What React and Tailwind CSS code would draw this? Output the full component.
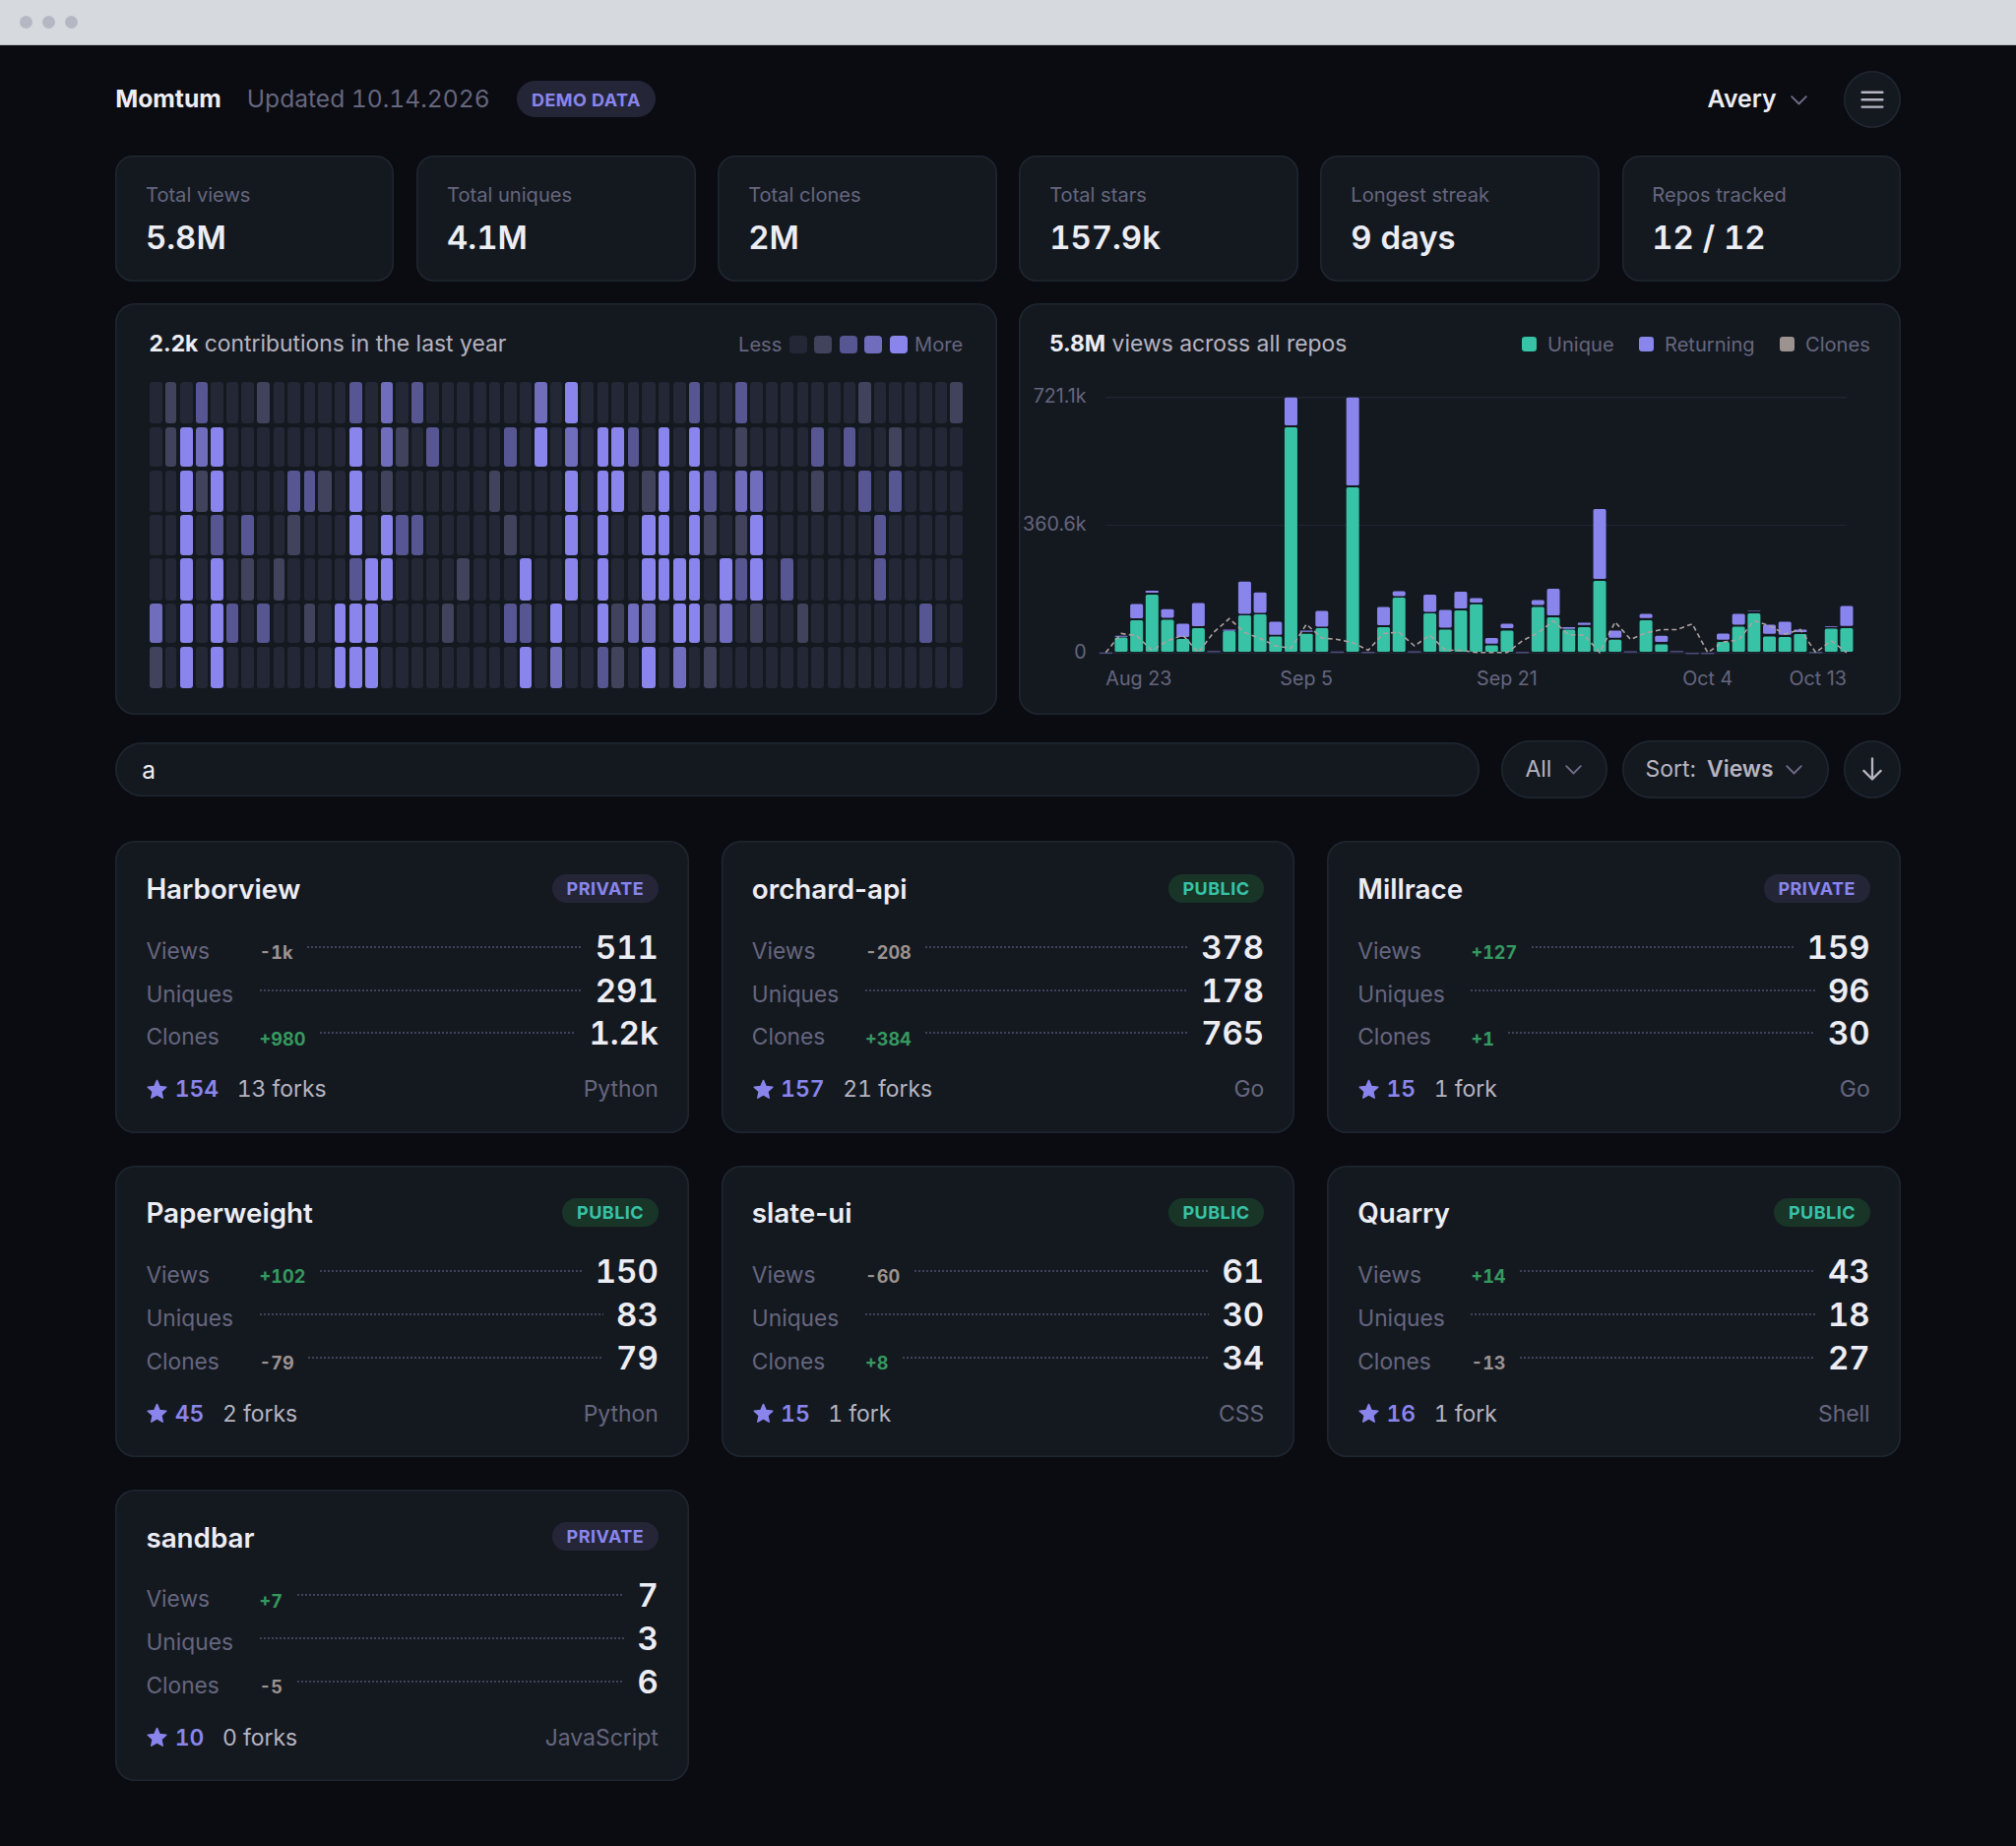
import React from "react";

const STATS = [
  ["Total views", "5.8M"],
  ["Total uniques", "4.1M"],
  ["Total clones", "2M"],
  ["Total stars", "157.9k"],
  ["Longest streak", "9 days"],
  ["Repos tracked", "12 / 12"],
];

const REPOS = [
  { name: "Harborview", priv: true, views: ["-1k", "511"], uniques: "291", clones: ["+980", "1.2k"], stars: "154", forks: "13 forks", lang: "Python" },
  { name: "orchard-api", priv: false, views: ["-208", "378"], uniques: "178", clones: ["+384", "765"], stars: "157", forks: "21 forks", lang: "Go" },
  { name: "Millrace", priv: true, views: ["+127", "159"], uniques: "96", clones: ["+1", "30"], stars: "15", forks: "1 fork", lang: "Go" },
  { name: "Paperweight", priv: false, views: ["+102", "150"], uniques: "83", clones: ["-79", "79"], stars: "45", forks: "2 forks", lang: "Python" },
  { name: "slate-ui", priv: false, views: ["-60", "61"], uniques: "30", clones: ["+8", "34"], stars: "15", forks: "1 fork", lang: "CSS" },
  { name: "Quarry", priv: false, views: ["+14", "43"], uniques: "18", clones: ["-13", "27"], stars: "16", forks: "1 fork", lang: "Shell" },
  { name: "sandbar", priv: true, views: ["+7", "7"], uniques: "3", clones: ["-5", "6"], stars: "10", forks: "0 forks", lang: "JavaScript" },
];

const LEVELS = ["bg-[#242736]", "bg-[#41425b]", "bg-[#575592]", "bg-[#706dbd]", "bg-[#8a85ec]"];

// Column index -> activity level, one record per weekday; absent columns are level 0.
const HEAT = [
  { 1: 1, 3: 2, 7: 1, 13: 2, 15: 3, 17: 2, 25: 3, 27: 4, 35: 2, 38: 2, 46: 1, 52: 1 },
  { 1: 1, 2: 4, 3: 3, 4: 4, 13: 4, 15: 3, 16: 1, 18: 2, 23: 2, 25: 4, 27: 3, 29: 4, 30: 4, 31: 2, 33: 4, 35: 4, 38: 1, 43: 2, 45: 2, 48: 1 },
  { 2: 4, 3: 1, 4: 4, 9: 2, 10: 2, 11: 1, 13: 4, 15: 1, 22: 1, 27: 4, 29: 4, 30: 4, 32: 1, 33: 4, 35: 4, 36: 2, 38: 3, 39: 3, 43: 1, 46: 2, 48: 2 },
  { 2: 4, 4: 2, 6: 2, 9: 1, 13: 4, 15: 4, 16: 2, 17: 2, 23: 1, 27: 4, 29: 4, 32: 4, 33: 4, 35: 4, 36: 1, 38: 1, 39: 4, 47: 2 },
  { 2: 4, 4: 4, 6: 1, 8: 1, 13: 2, 14: 4, 15: 4, 20: 1, 24: 4, 27: 4, 29: 4, 32: 4, 33: 4, 34: 4, 35: 4, 37: 4, 38: 2, 39: 4, 41: 2, 47: 2 },
  { 0: 3, 2: 4, 4: 4, 5: 2, 7: 2, 10: 1, 12: 4, 13: 4, 14: 4, 19: 1, 23: 2, 24: 2, 26: 4, 29: 4, 30: 1, 31: 3, 32: 3, 34: 4, 35: 4, 36: 1, 37: 3, 39: 1, 42: 1, 50: 2 },
  { 0: 1, 2: 4, 4: 4, 12: 4, 13: 4, 14: 4, 24: 4, 26: 3, 29: 2, 30: 1, 32: 4, 34: 3, 36: 1 },
];

// Relative widths of the 53 week columns.
const WEEKS = "87878788787878878787887878788787878788787878878787878".split("");

// [unique top, returning top, returning bottom] in thirds of a pixel;
// a single number marks a day with no traffic.
const BARS = [
  [1090], [1042, 1037, 1040], [990, 940, 984], [912, 900, 906], [988, 956, 982], [1047, 1000, 1041], [1014, 937, 1008],
  [1085], [1023, 1018, 1022], [975, 872, 970], [972, 905, 967], [1039, 994, 1034], [402, 311, 396], [1031, 1021, 1025],
  [1014, 961, 1009], [1087], [585, 311, 579], [1088], [1011, 949, 1005], [921, 901, 916], [1086], [969, 912, 964],
  [1018, 958, 1012], [960, 903, 954], [941, 922, 936], [1066, 1044, 1061], [1021, 1000, 1014], [1088], [949, 928, 943],
  [981, 894, 975], [1018, 1011, 1016], [1011, 997, 1004], [870, 651, 864], [1049, 1021, 1043], [1086], [990, 970, 983],
  [1063, 1037, 1056], [1085], [1091], [1091], [1056, 1030, 1049], [1009, 970, 1003], [969, 961, 963], [1039, 1003, 1031],
  [1041, 994, 1034], [1032, 1018, 1026], [1088], [1015, 1008, 1010], [1014, 946, 1007],
];
const CLONES = [
  1088, 1030, 1037, 1082, 1052, 1035, 1088, 1026, 985, 1027, 1045, 1068, 1075, 1002, 1044, 1048, 1058, 1081, 1030, 1026,
  1068, 1035, 1081, 1081, 1088, 1088, 1088, 1052, 1028, 992, 1034, 1035, 1088, 995, 1048, 1028, 1018, 1018, 1001, 1088,
  1056, 1050, 991, 1006, 1032, 1018, 1088, 1052, 1088,
];
const X0 = 88.3;
const STEP = 15.68;
const cx = (i) => X0 + i * STEP;
const cy = (v) => v / 3 - 7.9;

const PANEL = "bg-[#141920] inset-ring-[1.6px] inset-ring-[#1f262f]";

function Chevron() {
  return (
    <svg className="h-[10px] w-[17px] shrink-0" viewBox="0 0 17 10" fill="none" stroke="#6c6c86" strokeWidth="1.9" strokeLinecap="round" strokeLinejoin="round">
      <path d="M1.2 1.2 8.5 8.5 15.8 1.2" />
    </svg>
  );
}

function Header() {
  return (
    <header className="flex h-[59px] items-center">
      <span className="pb-[2px] text-[24.7px] leading-[30px] font-bold text-[#ededf4]">Momtum</span>
      <span className="ml-[26px] pb-[2px] text-[24.6px] leading-[30px] text-[#66667e] tabular-nums">Updated 10.14.2026</span>
      <span className="ml-[27.3px] flex h-[37px] w-[141px] items-center justify-center rounded-full bg-[#242638] pt-[2px] text-[18px] leading-none font-bold tracking-[0.025em] text-[#8a85ec]">DEMO DATA</span>
      <span className="ml-auto pb-[2px] text-[24.8px] leading-[30px] font-semibold text-[#ededf4]">Avery</span>
      <span className="mr-[37px] ml-[14px] flex pt-[2px]"><Chevron /></span>
      <button className={`flex size-[58.3px] items-center justify-center rounded-full ${PANEL}`}>
        <svg className="h-[20px] w-[24px]" viewBox="0 0 24 20" stroke="#b6b4c0" strokeWidth="2.4" strokeLinecap="round">
          <path d="M1.6 2.8H22.4M1.6 10.2H22.4M1.6 17.6H22.4" />
        </svg>
      </button>
    </header>
  );
}

function Heatmap() {
  return (
    <section className={`flex h-[418.8px] flex-col rounded-[20px] px-[34.4px] ${PANEL}`}>
      <div className="mt-[26px] flex h-[30px] items-center justify-between">
        <h2 className="text-[22.88px] leading-[30px] text-[#b6b4c0]"><b className="font-bold text-[#ededf4]">2.2k</b> contributions in the last year</h2>
        <div className="flex items-center gap-[7.3px] pt-[2px] text-[20.1px] leading-[28px] text-[#66667e]">
          Less
          {LEVELS.map((c) => <span key={c} className={`size-[18.2px] rounded-[4px] ${c}`} />)}
          More
        </div>
      </div>
      <div
        className="mt-[24.4px] grid h-[311px] gap-[3.27px]"
        style={{ gridTemplateColumns: WEEKS.map((c) => c + "fr").join(" "), gridTemplateRows: "26fr 25fr 26fr 25fr 26fr 25fr 26fr" }}
      >
        {HEAT.map((row, r) => WEEKS.map((_, c) => <span key={r + "-" + c} className={`rounded-[3.3px] ${LEVELS[row[c] || 0]}`} />))}
      </div>
    </section>
  );
}

function Legend({ color, label }) {
  return (
    <span className="flex items-center gap-[11px]">
      <i className={`size-[15px] rounded-[3.3px] ${color}`} />
      {label}
    </span>
  );
}

function ViewsChart() {
  return (
    <section className={`flex h-[418.8px] flex-col rounded-[20px] ${PANEL}`}>
      <div className="mt-[26px] flex h-[30px] items-center justify-between pr-[31px] pl-[30.5px]">
        <h2 className="text-[22.88px] leading-[30px] text-[#b6b4c0]"><b className="font-bold text-[#ededf4]">5.8M</b> views across all repos</h2>
        <div className="flex items-center gap-[25.4px] pt-[2px] text-[20.1px] leading-[28px] text-[#66667e]">
          <Legend color="bg-[#38c2a6]" label="Unique" />
          <Legend color="bg-[#8a85ec]" label="Returning" />
          <Legend color="bg-[#9c9290]" label="Clones" />
        </div>
      </div>
      <svg className="-mt-[56px] h-[418px] w-full" fill="#66667e" fontSize="19.7">
        <g stroke="#1f262f" strokeWidth="1.4">
          <path d={`M${X0} 95.8H${cx(48)}M${X0} 225.6H${cx(48)}M${X0} 355.2H${cx(48)}`} />
        </g>
        {BARS.map((b, i) =>
          b.length === 1 ? (
            <rect key={i} x={cx(i) - 6.6} y={cy(b[0]) - 0.8} width="13.2" height="1.5" fill="#56538c" opacity="0.85" />
          ) : (
            <g key={i}>
              <rect x={cx(i) - 6.5} y={cy(b[0])} width="13" height={(1086 - b[0]) / 3} rx="1.6" fill="#38c2a6" />
              <rect x={cx(i) - 6.5} y={cy(b[1])} width="13" height={(b[2] - b[1]) / 3} rx={b[2] - b[1] > 8 ? 1.6 : 0.5} fill="#8a85ec" />
            </g>
          )
        )}
        <polyline points={CLONES.map((v, i) => cx(i) + "," + cy(v)).join(" ")} fill="none" stroke="#aca2a1" strokeWidth="1.6" strokeDasharray="4.9 3.3" />
        <g textAnchor="end">
          <text x="68.6" y="101.2">721.1k</text>
          <text x="68.6" y="231.1">360.6k</text>
          <text x="68.6" y="361">0</text>
        </g>
        <text x={X0} y="387.5">Aug 23</text>
        <g textAnchor="middle">
          <text x={cx(13)} y="387.5">Sep 5</text>
          <text x={cx(26)} y="387.5">Sep 21</text>
          <text x={cx(39)} y="387.5">Oct 4</text>
        </g>
        <text x={cx(48)} y="387.5" textAnchor="end">Oct 13</text>
      </svg>
    </section>
  );
}

function Toolbar() {
  return (
    <div className="mt-[25.7px] flex h-[58.7px] items-center">
      <input defaultValue="a" className={`h-[55px] min-w-0 flex-1 rounded-full px-[27px] pt-0 text-[24.5px] text-[#ededf4] outline-none ${PANEL}`} />
      <button className={`ml-[21.8px] flex h-[58.7px] w-[108px] items-center rounded-full pl-[24.7px] text-[22.9px] text-[#b6b4c0] ${PANEL}`}>
        <span className="w-[40.5px] pb-[1.5px] text-left">All</span><Chevron />
      </button>
      <button className={`ml-[14.7px] flex h-[58.7px] w-[210.3px] items-center rounded-full pl-[24px] text-[22.9px] text-[#b6b4c0] ${PANEL}`}>
        <span className="w-[62.5px] pb-[1.5px] text-left">Sort:</span>
        <span className="w-[80.2px] pb-[1.5px] text-left font-semibold">Views</span><Chevron />
      </button>
      <button className={`ml-[14.7px] flex size-[58.3px] items-center justify-center rounded-full ${PANEL}`}>
        <svg className="h-[24px] w-[22px]" viewBox="0 0 22 24" fill="none" stroke="#b6b4c0" strokeWidth="2.3" strokeLinecap="round" strokeLinejoin="round">
          <path d="M11 1.5V22.5M2.4 13.9 11 22.5 19.6 13.9" />
        </svg>
      </button>
    </div>
  );
}

function Metric({ label, delta, value }) {
  return (
    <div className="flex h-[43.9px] items-center">
      <span className="w-[115.2px] shrink-0 pt-[8px] text-[22.75px] leading-[26px] text-[#66667e]">{label}</span>
      {delta && (
        <span className={`mr-[14.6px] pt-[11px] text-[18.1px] leading-[22px] font-bold tabular-nums ${delta[0] === "+" ? "text-[#35995f]" : "text-[#9c9290]"}`}>{delta}</span>
      )}
      <span className="h-[2px] flex-1 bg-[repeating-linear-gradient(90deg,#414259_0_2px,transparent_2px_4px)]" />
      <span className="ml-[13.2px] text-[33px] leading-[40px] font-semibold text-[#ededf4] tabular-nums">{value}</span>
    </div>
  );
}

function RepoCard({ repo }) {
  return (
    <article className={`flex h-[296.5px] flex-col rounded-[20px] px-[31.2px] ${PANEL}`}>
      <div className="mt-[31.8px] flex h-[32px] items-center justify-between">
        <h3 className="pt-[2px] text-[27.8px] leading-[32px] font-semibold text-[#ededf4]">{repo.name}</h3>
        <span className={`flex h-[29.4px] items-center rounded-full px-[14.7px] pt-[1px] text-[18px] leading-none font-bold tracking-[0.025em] ${repo.priv ? "bg-[#242638] text-[#8a85ec]" : "bg-[#183528] text-[#38c2a6]"}`}>
          {repo.priv ? "PRIVATE" : "PUBLIC"}
        </span>
      </div>
      <div className="mt-[21.5px]">
        <Metric label="Views" delta={repo.views[0]} value={repo.views[1]} />
        <Metric label="Uniques" value={repo.uniques} />
        <Metric label="Clones" delta={repo.clones[0]} value={repo.clones[1]} />
      </div>
      <div className="mt-[20px] flex h-[30px] items-center text-[22.9px] leading-[30px]">
        <svg className="ml-[1px] size-[21px]" viewBox="0 0 24 24" fill="#8a85ec" stroke="#8a85ec" strokeWidth="1.6" strokeLinejoin="round">
          <path d="M12 1.6 15.1 8.6 22.7 9.4 17 14.5 18.6 22 12 18.1 5.4 22 7 14.5 1.3 9.4 8.9 8.6Z" />
        </svg>
        <span className="ml-[7.3px] font-semibold text-[#8a85ec] tabular-nums">{repo.stars}</span>
        <span className="ml-[18.6px] text-[#b6b4c0] tabular-nums">{repo.forks}</span>
        <span className="ml-auto text-[#66667e]">{repo.lang}</span>
      </div>
    </article>
  );
}

export default function App() {
  return (
    <div className="min-h-[1875px] w-[2048px] bg-[#0a0c11] font-['Inter',sans-serif]">
      <div className="flex h-[46px] items-center gap-[10px] border-b border-[#b9bcc4] bg-[#d6d9de] pl-[20px]">
        <i className="size-[13px] rounded-full bg-[#b5b8c3]" />
        <i className="size-[13px] rounded-full bg-[#b5b8c3]" />
        <i className="size-[13px] rounded-full bg-[#b5b8c3]" />
      </div>
      <main className="px-[117.2px] pt-[25.4px]">
        <Header />
        <div className="mt-[27.3px] grid grid-cols-6 gap-[22.8px]">
          {STATS.map(([label, value]) => (
            <div key={label} className={`h-[128.2px] rounded-[18px] pl-[30.8px] pt-[28.6px] ${PANEL}`}>
              <div className="text-[20.1px] leading-[24px] text-[#66667e]">{label}</div>
              <div className="mt-[11px] text-[32.9px] leading-[40px] font-semibold text-[#ededf4] tabular-nums">{value}</div>
            </div>
          ))}
        </div>
        <div className="mt-[21.8px] grid grid-cols-2 gap-[22.8px]">
          <Heatmap />
          <ViewsChart />
        </div>
        <Toolbar />
        <div className="mt-[43.6px] grid grid-cols-3 gap-[32.7px]">
          {REPOS.map((r) => <RepoCard key={r.name} repo={r} />)}
        </div>
      </main>
    </div>
  );
}
